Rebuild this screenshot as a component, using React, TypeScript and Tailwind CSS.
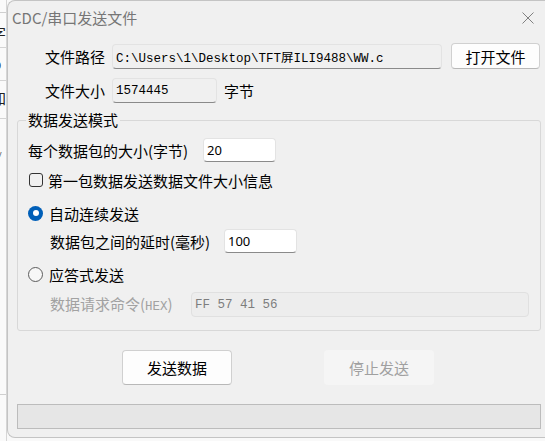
import type { ReactNode } from "react";

const boxBase = "rounded-[4px] border border-[#e3e3e3] border-b-[#8a8a8a] outline-none";
const mono = "font-['Liberation_Mono','Noto_Sans_CJK_SC',monospace] text-[12.5px]";

const TextBox = ({ value, className, disabled }: { value: string; className: string; disabled?: boolean }) => (
  <input
    readOnly
    value={value}
    className={`${className} ${disabled ? "rounded-[4px] border border-[#e0e0e0] bg-[#ededed] text-[#7d7d7d] outline-none" : boxBase} px-[3px]`}
  />
);

const Radio = ({ checked, children }: { checked?: boolean; children: ReactNode }) => (
  <div className="flex h-[20px] items-center">
    {checked ? (
      <span className="flex h-[15px] w-[15px] items-center justify-center rounded-full bg-[#005fb8]">
        <span className="h-[6px] w-[6px] rounded-full bg-white" />
      </span>
    ) : (
      <span className="h-[15px] w-[15px] rounded-full border border-[#5c5c5c] bg-[#f7f7f7]" />
    )}
    <span className="ml-[6px]">{children}</span>
  </div>
);

// strip of the window that sits behind the dialog
const BackStrip = () => (
  <div className="flex h-full w-[7px] flex-col overflow-hidden border-r border-[#d6d6d6] bg-[#fafafa] text-[15px] text-[#222]">
    <div className="h-[13px] border-b border-[#cfcfcf]" />
    <div className="mt-[12px] -ml-[9px] h-[16px] leading-[16px]">字</div>
    <div className="mt-[6px] border-b border-[#d4d4d4]" />
    <div className="mt-[10px] -ml-[7px] h-[14px] text-[12px] leading-[14px]">D</div>
    <div className="mt-[8px] border-b border-[#d4d4d4]" />
    <div className="mt-[9px] -ml-[9px] h-[16px] leading-[16px]">加</div>
    <div className="mt-[12px] border-b border-[#d4d4d4]" />
    <div className="mt-[30px] -ml-[3px] h-[10px] text-[9px] leading-[10px] text-[#666]">v</div>
    <div className="mt-[22px] -ml-[6px] h-[12px] text-[11px] leading-[12px]">z</div>
    <div className="mt-auto mb-[46px] border-b border-[#cfcfcf]" />
  </div>
);

export default function App() {
  return (
    <div className="flex h-[441px] w-[545px] overflow-hidden bg-[#f9f9f9] font-['Noto_Sans_CJK_SC',sans-serif] text-[15px] text-black">
      <BackStrip />
      <div className="flex h-[438px] flex-1 flex-col rounded-l-[8px] border border-r-0 border-[#c4c4c4] bg-[#f0f0f0] leading-none">
        {/* title bar */}
        <div className="flex h-[33px] items-center pl-[4px]">
          <span className="text-[15px] text-[#767676]">CDC/串口发送文件</span>
          <svg className="mr-[11px] ml-auto" width="12" height="12" viewBox="0 0 12 12">
            <path d="M0.5 0.5 L11.5 11.5 M11.5 0.5 L0.5 11.5" stroke="#808080" strokeWidth="1" fill="none" />
          </svg>
        </div>

        {/* file path */}
        <div className="mt-[9px] flex h-[26px] items-center pl-[37px]">
          <span className="w-[67px]">文件路径</span>
          <TextBox value="C:\Users\1\Desktop\TFT屏ILI9488\WW.c" className={`h-[25px] w-[330px] bg-[#f0f0f0] ${mono}`} />
          <button className="ml-[9px] h-[26px] w-[89px] rounded-[4px] border border-[#d0d0d0] border-b-[#b8b8b8] bg-[#fdfdfd]">
            打开文件
          </button>
        </div>

        {/* file size */}
        <div className="mt-[9px] flex h-[25px] items-center pl-[37px]">
          <span className="w-[67px]">文件大小</span>
          <TextBox value="1574445" className={`h-[25px] w-[105px] bg-[#f0f0f0] ${mono}`} />
          <span className="ml-[7px]">字节</span>
        </div>

        {/* send mode group */}
        <fieldset className="mt-[7px] ml-[9px] w-[524px] rounded-[3px] border border-[#d8d8d8]">
          <legend className="ml-[8px] h-[20px] px-[2px] leading-[20px]">数据发送模式</legend>
          <div className="flex flex-col pb-[13px] pl-[10px]">
            <div className="mt-[8px] flex h-[24px] items-center">
              <span className="w-[175px]">每个数据包的大小(字节)</span>
              <TextBox value="20" className="h-[24px] w-[73px] bg-white font-['Noto_Sans',sans-serif] text-[13px]" />
            </div>

            <div className="mt-[8px] flex h-[20px] items-center">
              <span className="ml-[1px] h-[14px] w-[14px] rounded-[3px] border border-[#333]" />
              <span className="ml-[5px]">第一包数据发送数据文件大小信息</span>
            </div>

            <div className="mt-[13px]">
              <Radio checked>自动连续发送</Radio>
            </div>

            <div className="mt-[6px] flex h-[24px] items-center pl-[22px]">
              <span className="w-[174px]">数据包之间的延时(毫秒)</span>
              <TextBox value="100" className="h-[24px] w-[73px] bg-white font-['Noto_Sans',sans-serif] text-[13px]" />
            </div>

            <div className="mt-[11px]">
              <Radio>应答式发送</Radio>
            </div>

            <div className="mt-[8px] flex h-[25px] items-center pl-[22px]">
              <span className="w-[141px] text-[#a2a2a2]">
                数据请求命令(<span className={mono}>HEX</span>)
              </span>
              <TextBox disabled value="FF 57 41 56" className={`h-[25px] w-[338px] ${mono}`} />
            </div>
          </div>
        </fieldset>

        {/* actions */}
        <div className="mt-[19px] flex h-[35px] pl-[114px]">
          <button className="w-[110px] rounded-[4px] border border-[#d0d0d0] border-b-[#b8b8b8] bg-[#fdfdfd]">发送数据</button>
          <button className="ml-[92px] w-[110px] rounded-[4px] bg-[#f5f5f5] text-[#a0a0a0]">停止发送</button>
        </div>

        {/* progress */}
        <div className="mt-[19px] ml-[9px] h-[25px] w-[524px] border border-[#bcbcbc] bg-[#e6e6e6]" />
      </div>
    </div>
  );
}
